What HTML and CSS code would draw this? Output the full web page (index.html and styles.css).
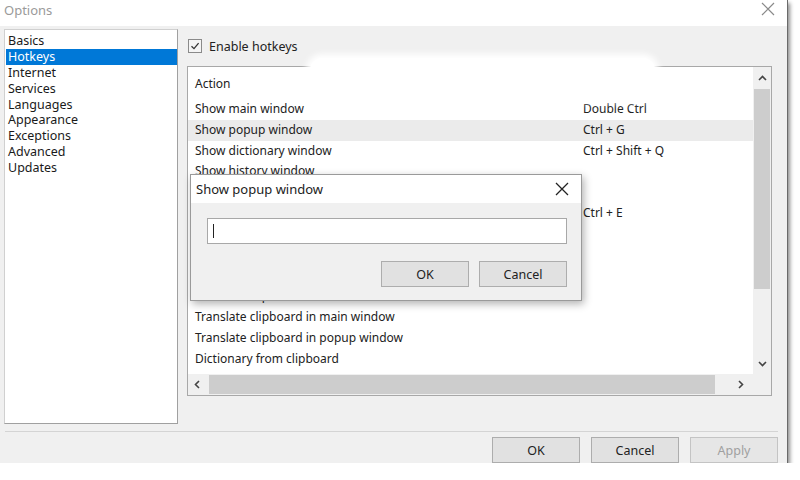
FILE: index.html
```html
<!DOCTYPE html>
<html lang="en">
  <head>
    <meta charset="UTF-8" />
    <title>Options</title>
    <link rel="stylesheet" href="styles.css">
  </head>
  <body>
    <div class="window">
      <div class="titlebar">
        <span class="title">Options</span>
        <svg class="close" width="14" height="14" viewBox="0 0 14 14">
          <path d="M1 1 L13 13 M13 1 L1 13" stroke="#8a8a8a" stroke-width="1.2" />
        </svg>
      </div>

      <div class="content">
        <ul class="sections">
          <li>Basics</li>
          <li class="selected">Hotkeys</li>
          <li>Internet</li>
          <li>Services</li>
          <li>Languages</li>
          <li>Appearance</li>
          <li>Exceptions</li>
          <li>Advanced</li>
          <li>Updates</li>
        </ul>

        <div class="pane">
          <label class="check">
            <span class="box">
              <svg width="10" height="10" viewBox="0 0 10 10">
                <path d="M1.5 5.2 L4 7.6 L8.6 2.2" fill="none" stroke="#333" stroke-width="1.3" />
              </svg>
            </span>
            Enable hotkeys
          </label>

          <div class="listview">
            <div class="lv-main">
              <div class="lv-rows">
                <div class="lv-head">Action</div>
                <div class="row"><span class="act">Show main window</span><span class="key">Double Ctrl</span></div>
                <div class="row hover"><span class="act">Show popup window</span><span class="key">Ctrl + G</span></div>
                <div class="row"><span class="act">Show dictionary window</span><span class="key">Ctrl + Shift + Q</span></div>
                <div class="row"><span class="act">Show history window</span><span class="key"></span></div>
                <div class="row"><span class="act">Show settings window</span><span class="key"></span></div>
                <div class="row"><span class="act">Translate selection</span><span class="key">Ctrl + E</span></div>
                <div class="row"><span class="act">Translate selection in main window</span><span class="key"></span></div>
                <div class="row"><span class="act">Translate selection in popup window</span><span class="key"></span></div>
                <div class="row"><span class="act">Dictionary from selection</span><span class="key"></span></div>
                <div class="row"><span class="act">Translate clipboard</span><span class="key"></span></div>
                <div class="row"><span class="act">Translate clipboard in main window</span><span class="key"></span></div>
                <div class="row"><span class="act">Translate clipboard in popup window</span><span class="key"></span></div>
                <div class="row"><span class="act">Dictionary from clipboard</span><span class="key"></span></div>
              </div>
              <div class="vscroll">
                <span class="arrow">
                  <svg width="9" height="6" viewBox="0 0 9 6"><path d="M1 5 L4.5 1.5 L8 5" fill="none" stroke="#444" stroke-width="1.6" /></svg>
                </span>
                <span class="vthumb"></span>
                <span class="vtrack"></span>
                <span class="arrow">
                  <svg width="9" height="6" viewBox="0 0 9 6"><path d="M1 1 L4.5 4.5 L8 1" fill="none" stroke="#444" stroke-width="1.6" /></svg>
                </span>
              </div>
            </div>
            <div class="hscroll">
              <span class="harrow">
                <svg width="6" height="9" viewBox="0 0 6 9"><path d="M5 1 L1.5 4.5 L5 8" fill="none" stroke="#444" stroke-width="1.6" /></svg>
              </span>
              <span class="hthumb"></span>
              <span class="harrow">
                <svg width="6" height="9" viewBox="0 0 6 9"><path d="M1 1 L4.5 4.5 L1 8" fill="none" stroke="#444" stroke-width="1.6" /></svg>
              </span>
              <span class="corner"></span>
            </div>
          </div>
        </div>
      </div>

      <div class="footer">
        <button class="btn">OK</button>
        <button class="btn">Cancel</button>
        <button class="btn disabled">Apply</button>
      </div>

      <div class="smudge"></div>

      <div class="popup">
        <div class="popup-title">
          <span>Show popup window</span>
          <svg width="14" height="14" viewBox="0 0 14 14">
            <path d="M1 1 L13 13 M13 1 L1 13" stroke="#222" stroke-width="1.3" />
          </svg>
        </div>
        <div class="popup-body">
          <div class="input"><span class="caret"></span></div>
          <div class="popup-buttons">
            <button class="btn">OK</button>
            <button class="btn">Cancel</button>
          </div>
        </div>
      </div>
    </div>
  </body>
</html>
```

FILE: styles.css
```css
body {
  margin: 0;
  background-color: #fff;
  font-family: "Noto Sans", "Liberation Sans", sans-serif;
  font-size: 12px;
  color: #222;
}

.window {
  position: relative;
  width: 787px;
  height: 463px;
  background-color: #f0f0f0;
  border-right: 1px solid #6a6a6a;
  box-shadow: 2px 3px 4px rgba(0, 0, 0, 0.45);
}

.titlebar {
  height: 26px;
  background-color: #fff;
  display: flex;
  align-items: center;
  justify-content: space-between;
  padding: 0 12px 0 4px;
}

.title {
  font-size: 13px;
  color: #9a9a9a;
  margin-top: -6px;
}

.close {
  margin-top: -8px;
}

.content {
  display: flex;
  padding: 3px 0 0 4px;
}

.sections {
  list-style: none;
  margin: 0;
  padding: 3px 0 0 1px;
  width: 171px;
  height: 390px;
  background-color: #fff;
  border: 1px solid #a0a0a0;
  border-top-color: #d0d0d0;
  border-left-color: #d0d0d0;
}

.sections li {
  height: 15.9px;
  line-height: 15px;
  padding-left: 2px;
  font-size: 12.5px;
  color: #1a1a1a;
}

.sections li.selected {
  background-color: #0078d7;
  color: #fff;
}

.pane {
  margin-left: 9px;
  padding-top: 9px;
}

.check {
  display: flex;
  align-items: center;
  gap: 7px;
  height: 16px;
  font-size: 12.5px;
  margin-left: 1px;
}

.box {
  width: 12px;
  height: 12px;
  border: 1px solid #8a8a8a;
  background-color: #f4f4f4;
  display: flex;
  align-items: center;
  justify-content: center;
}

.listview {
  margin-top: 12px;
  width: 583px;
  height: 328px;
  border: 1px solid #a8a8a8;
  background-color: #fff;
  display: flex;
  flex-direction: column;
}

.lv-main {
  flex: 1;
  display: flex;
  overflow: hidden;
}

.lv-rows {
  flex: 1;
  overflow: hidden;
}

.lv-head {
  height: 32px;
  line-height: 34px;
  padding-left: 7px;
}

.row {
  display: flex;
  height: 20.8px;
  line-height: 20px;
  padding-left: 7px;
}

.row.hover {
  background-color: #ebebeb;
}

.act {
  width: 388px;
}

.vscroll {
  width: 18px;
  display: flex;
  flex-direction: column;
  background-color: #f0f0f0;
}

.arrow {
  height: 21px;
  display: flex;
  align-items: center;
  justify-content: center;
}

.vthumb {
  height: 200px;
  margin: 1px 1px 0;
  background-color: #cdcdcd;
}

.vtrack {
  flex: 1;
}

.hscroll {
  height: 21px;
  display: flex;
  background-color: #f0f0f0;
}

.harrow {
  width: 18px;
  display: flex;
  align-items: center;
  justify-content: center;
}

.hthumb {
  width: 506px;
  margin: 1px 17px 1px 3px;
  background-color: #cdcdcd;
}

.corner {
  width: 18px;
  background-color: #f0f0f0;
}

.footer {
  margin-top: 7px;
  border-top: 1px solid #d4d4d4;
  margin-left: 5px;
  margin-right: 9px;
  padding-top: 5px;
  display: flex;
  justify-content: flex-end;
  gap: 11px;
}

.btn {
  width: 88px;
  height: 26px;
  border: 1px solid #adadad;
  background-color: #e1e1e1;
  font-family: "Noto Sans", "Liberation Sans", sans-serif;
  font-size: 12.5px;
  color: #222;
  padding: 0;
}

.btn.disabled {
  color: #a0a0a0;
  border-color: #c4c4c4;
  background-color: #e6e6e6;
}

.smudge {
  position: absolute;
  left: 310px;
  top: 58px;
  width: 345px;
  height: 40px;
  background-color: #fff;
  border-radius: 12px;
  box-shadow: 0 0 6px 4px #fff;
}

.popup {
  position: absolute;
  left: 190px;
  top: 174px;
  width: 390px;
  height: 125px;
  border: 1px solid #9a9a9a;
  background-color: #f0f0f0;
  box-shadow: 2px 3px 8px rgba(0, 0, 0, 0.3);
}

.popup-title {
  height: 28px;
  background-color: #fff;
  display: flex;
  align-items: center;
  justify-content: space-between;
  padding: 0 12px 0 5px;
  font-size: 13px;
}

.popup-body {
  padding: 15px 14px 0 16px;
}

.input {
  height: 24px;
  border: 1px solid #a8a8a8;
  background-color: #fff;
  display: flex;
  align-items: center;
  padding-left: 5px;
}

.caret {
  width: 1px;
  height: 14px;
  background-color: #222;
}

.popup-buttons {
  margin-top: 17px;
  display: flex;
  justify-content: flex-end;
  gap: 10px;
}
```
